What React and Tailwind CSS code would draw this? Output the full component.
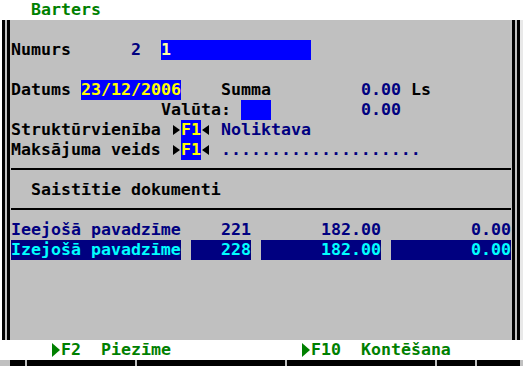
const mono = "font-['DejaVu_Sans_Mono',monospace]";

function ArrowRight({ className }) {
  return (
    <svg width="10" height="20" viewBox="0 0 10 20" className={className}>
      <polygon points="2,5 9,10 2,15" fill="currentColor" />
    </svg>
  );
}

function ArrowLeft({ className }) {
  return (
    <svg width="10" height="20" viewBox="0 0 10 20" className={className}>
      <polygon points="8,5 1,10 8,15" fill="currentColor" />
    </svg>
  );
}

function KeyArrow() {
  return (
    <svg width="10" height="20" viewBox="0 0 10 20" className="text-[#008000]">
      <polygon points="1,3 9,10 1,17" fill="currentColor" />
    </svg>
  );
}

function Line() {
  return (
    <div className="h-[20px] pt-[8px]">
      <div className="h-[2px] w-[500px] bg-black" />
    </div>
  );
}

function Row({ children }) {
  return <div className="flex h-[20px] whitespace-pre">{children}</div>;
}

export default function App() {
  return (
    <div
      className={`w-[523px] h-[366px] overflow-hidden bg-white ${mono} text-[16.6px] leading-[20px] font-bold`}
    >
      {/* title */}
      <div className="h-[20px] w-[520px] bg-white pl-[31px] text-[#008000]">Barters</div>

      {/* body */}
      <div className="flex h-[320px]">
        <div className="flex w-[11px] bg-[#c0c0c0]">
          <div className="w-[2px] bg-white" />
          <div className="w-[3px] bg-black" />
          <div className="w-[2px]" />
          <div className="w-[3px] bg-black" />
        </div>

        <div className="w-[501px] bg-[#c0c0c0] text-black">
          <Row />
          <Row>
            <span className="w-[120px]">Numurs</span>
            <span className="w-[30px] text-[#000080]">2</span>
            <span className="w-[150px] bg-[#0000ff] text-[#ffffa0]">1</span>
          </Row>
          <Row />
          <Row>
            <span className="w-[70px]">Datums</span>
            <span className="w-[100px] bg-[#0000ff] text-[#ffff00]">23/12/2006</span>
            <span className="w-[40px]" />
            <span className="w-[140px]">Summa</span>
            <span className="w-[50px] text-[#000080]">0.00</span>
            <span>Ls</span>
          </Row>
          <Row>
            <span className="w-[150px]" />
            <span className="w-[80px]">Valūta:</span>
            <span className="w-[30px] bg-[#0000ff]" />
            <span className="w-[90px]" />
            <span className="text-[#000080]">0.00</span>
          </Row>
          <Row>
            <span className="w-[160px]">Struktūrvienība</span>
            <ArrowRight className="text-black" />
            <span className="w-[20px] bg-[#0000ff] text-[#ffff00]">F1</span>
            <ArrowLeft className="text-black" />
            <span className="w-[10px]" />
            <span className="text-[#000080]">Noliktava</span>
          </Row>
          <Row>
            <span className="w-[160px]">Maksājuma veids</span>
            <ArrowRight className="text-black" />
            <span className="w-[20px] bg-[#0000ff] text-[#ffff00]">F1</span>
            <ArrowLeft className="text-black" />
            <span className="w-[10px]" />
            <span className="text-[#000080]">....................</span>
          </Row>
          <Line />
          <Row>
            <span className="pl-[20px]">Saistītie dokumenti</span>
          </Row>
          <Line />
          <Row>
            <span className="w-[170px] text-[#000080]">Ieejošā pavadzīme</span>
            <span className="w-[10px]" />
            <span className="w-[60px] text-right text-[#000080]">221</span>
            <span className="w-[10px]" />
            <span className="w-[120px] text-right text-[#000080]">182.00</span>
            <span className="w-[10px]" />
            <span className="w-[120px] text-right text-[#000080]">0.00</span>
          </Row>
          <Row>
            <span className="w-[170px] bg-[#000080] text-[#00ffff]">Izejošā pavadzīme</span>
            <span className="w-[10px]" />
            <span className="w-[60px] bg-[#000080] text-right text-[#00ffff]">228</span>
            <span className="w-[10px]" />
            <span className="w-[120px] bg-[#000080] text-right text-[#00ffff]">182.00</span>
            <span className="w-[10px]" />
            <span className="w-[120px] bg-[#000080] text-right text-[#00ffff]">0.00</span>
          </Row>
        </div>

        <div className="flex w-[11px] bg-[#c0c0c0]">
          <div className="w-[3px] bg-black" />
          <div className="w-[2px]" />
          <div className="w-[3px] bg-black" />
          <div className="w-[3px] bg-[#e8e8e8]" />
        </div>
      </div>

      {/* function keys */}
      <div className="flex h-[20px] w-[520px] whitespace-pre bg-white pl-[51px] text-[#008000]">
        <KeyArrow />
        <span className="w-[240px]">F2  Piezīme</span>
        <KeyArrow />
        <span>F10  Kontēšana</span>
      </div>

      {/* bottom strip */}
      <div className="flex h-[6px] bg-[#c0c0c0]">
        <div className="w-[10px]" />
        <div className="w-[15px] bg-black" />
        <div className="w-[2px]" />
        <div className="w-[108px] bg-black" />
        <div className="w-[2px]" />
        <div className="w-[148px] bg-black" />
        <div className="w-[2px]" />
        <div className="w-[148px] bg-black" />
        <div className="w-[2px]" />
        <div className="w-[38px] bg-black" />
        <div className="w-[2px]" />
        <div className="w-[43px] bg-black" />
      </div>
    </div>
  );
}
